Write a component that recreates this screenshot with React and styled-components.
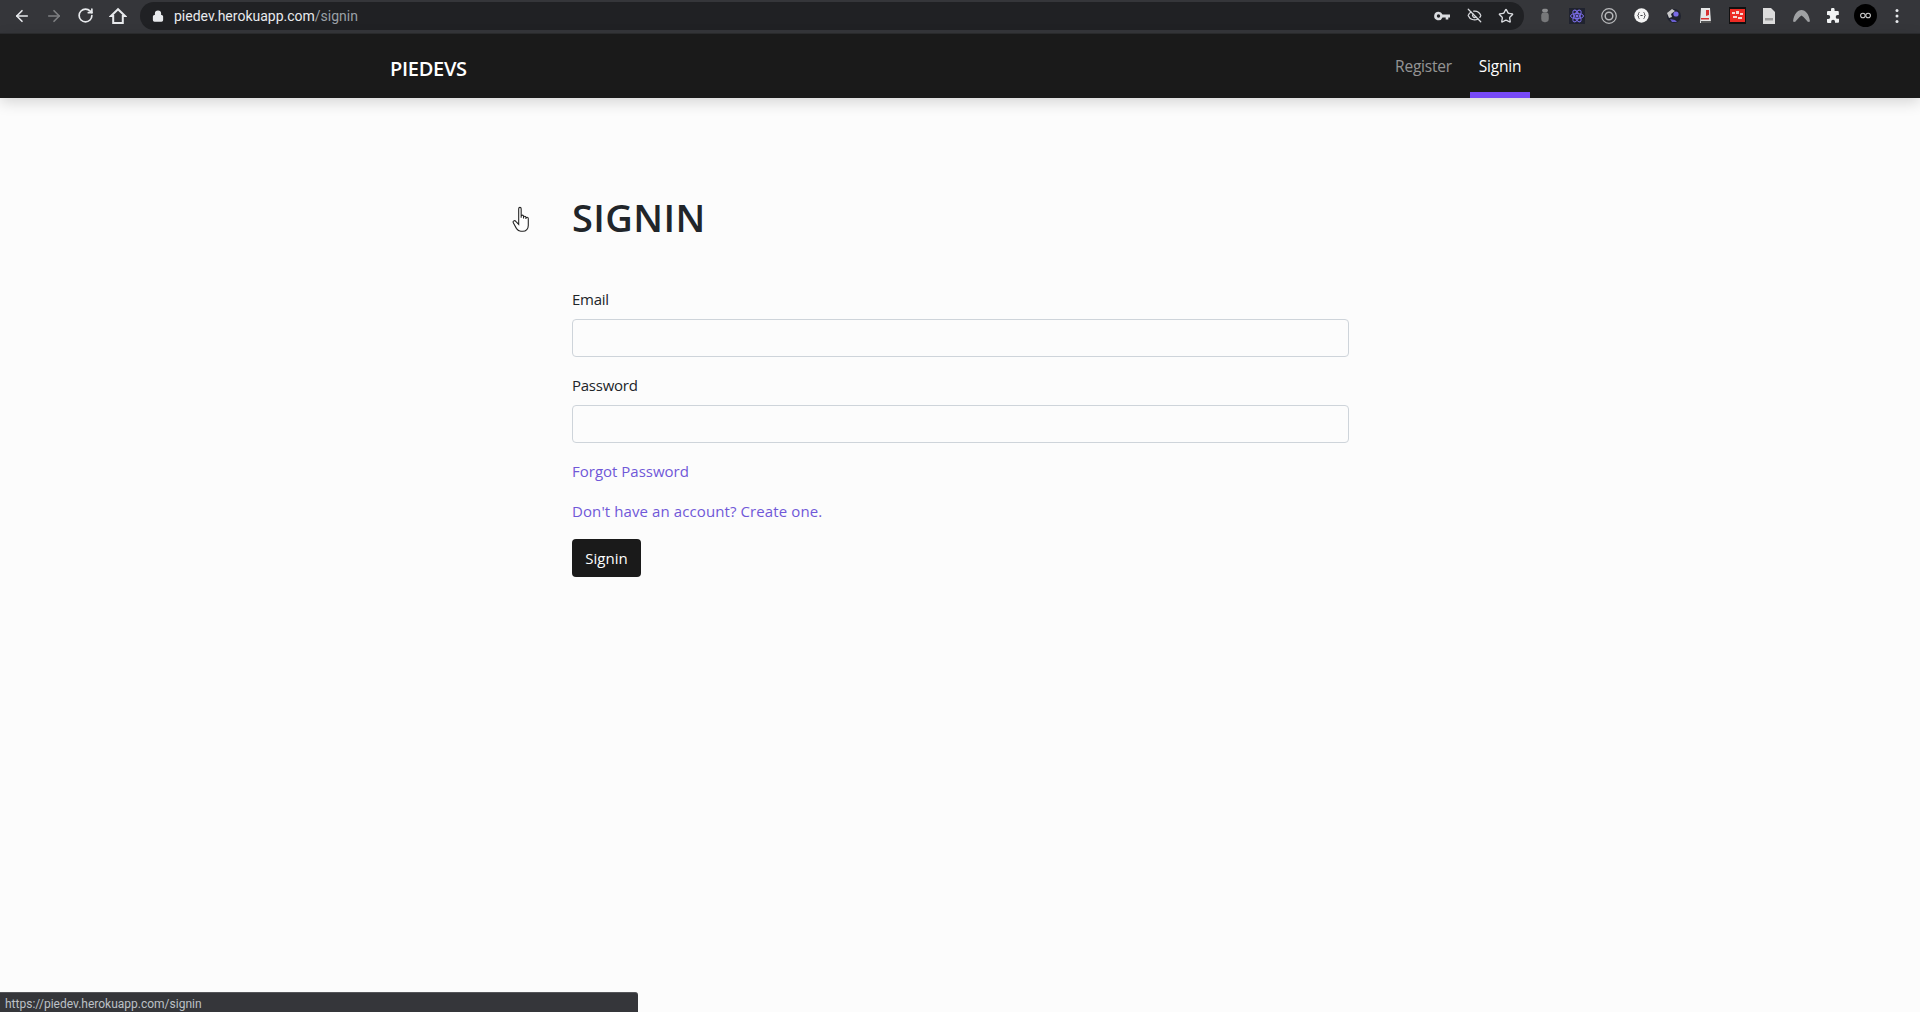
import styled, { createGlobalStyle } from 'styled-components';
import { ArrowLeft, ArrowRight, RotateCw, Lock, EyeOff, Star } from 'lucide-react';

const GlobalStyle = createGlobalStyle`
  html, body {
    margin: 0;
    padding: 0;
    background: #fcfcfc;
  }
  * { box-sizing: border-box; }
`;

const Page = styled.div`
  height: 1012px;
  overflow: hidden;
  display: flex;
  flex-direction: column;
  background: #fcfcfc;
  font-family: "Open Sans", "Noto Sans", sans-serif;
  color: #212529;
`;

const BrowserBar = styled.div`
  height: 34px;
  flex: none;
  display: flex;
  align-items: center;
  padding: 0 0 2px 13px;
  background: #35363a;
  border-bottom: 1px solid #2b2c2f;
`;

const NavButton = styled.div`
  width: 32px;
  flex: none;
  display: flex;
  align-items: center;
  color: ${({ $dim }) => ($dim ? '#7f8083' : '#e8eaed')};
`;

const Omnibox = styled.div`
  width: 1384px;
  height: 28px;
  flex: none;
  margin-left: -1px;
  display: flex;
  align-items: center;
  padding: 0 2px 0 12px;
  border-radius: 14px;
  background: #202124;
  font-family: "Roboto", sans-serif;
  font-size: 14px;
  color: #e8eaed;
`;

const UrlText = styled.span`
  margin-left: 10px;
  flex: 1;
  span { color: #9aa0a6; }
`;

const OmniIcon = styled.div`
  width: 32px;
  display: flex;
  justify-content: center;
  color: #dadce0;
`;

const Extensions = styled.div`
  display: flex;
  align-items: center;
  margin-left: 5px;
`;

const Ext = styled.div`
  width: 32px;
  height: 24px;
  flex: none;
  display: flex;
  align-items: center;
  justify-content: center;
`;

const Navbar = styled.nav`
  height: 64px;
  flex: none;
  background: #1a1a1a;
  box-shadow: 0 4px 14px rgba(0, 0, 0, 0.16);
  position: relative;
`;

const NavInner = styled.div`
  width: 1140px;
  height: 100%;
  margin: 0 auto;
  display: flex;
  align-items: stretch;
  justify-content: space-between;
`;

const Brand = styled.a`
  align-self: center;
  padding-top: 5px;
  font-size: 20px;
  font-weight: 600;
  letter-spacing: -0.3px;
  color: #fff;
`;

const NavLinks = styled.div`
  display: flex;
`;

const NavLink = styled.a`
  display: flex;
  align-items: center;
  justify-content: center;
  height: 100%;
  padding: 5px 0 0;
  margin-left: ${({ $gap }) => $gap}px;
  width: ${({ $w }) => $w}px;
  font-size: 15.5px;
  letter-spacing: -0.2px;
  color: ${({ $active }) => ($active ? '#fff' : 'rgba(255, 255, 255, 0.55)')};
  border-bottom: 6px solid ${({ $active }) => ($active ? '#7749f8' : 'transparent')};
`;

const Main = styled.main`
  width: 1140px;
  margin: 0 auto;
  padding: 0 182px;
`;

const FormWrap = styled.div`
  width: 777px;
  position: relative;
`;

const Title = styled.h1`
  margin: 0;
  padding-top: 93px;
  height: 189px;
  font-size: 38px;
  line-height: 52px;
  font-weight: 600;
  letter-spacing: 0.4px;
  color: #212529;
`;

const Field = styled.div`
  margin-bottom: 16px;
`;

const Label = styled.label`
  display: block;
  height: 32px;
  font-size: 15px;
  line-height: 24px;
  letter-spacing: -0.25px;
  color: #212529;
`;

const Input = styled.input`
  display: block;
  width: 100%;
  height: 38px;
  padding: 6px 12px;
  background: #fcfcfc;
  border: 1px solid #ced4da;
  border-radius: 4px;
  outline: none;
`;

const TextLink = styled.a`
  display: block;
  height: 24px;
  margin-top: ${({ $top }) => $top}px;
  font-size: 15px;
  line-height: 24px;
  letter-spacing: ${({ $spacing }) => $spacing || 0}px;
  color: #7058d8;
`;

const SubmitButton = styled.button`
  display: block;
  width: 69px;
  height: 38px;
  margin-top: 16px;
  padding: 0;
  border: none;
  border-radius: 4px;
  background: #1a1a1a;
  color: #fff;
  font-family: inherit;
  font-size: 15px;
`;

const Cursor = styled.svg`
  position: absolute;
  left: -60px;
  top: 108px;
`;

const StatusBubble = styled.div`
  position: fixed;
  left: 0;
  bottom: 0;
  width: 638px;
  height: 20px;
  padding: 4px 0 0 5px;
  background: #35363a;
  border-top: 1px solid #55565a;
  border-top-right-radius: 3px;
  font-family: "Roboto", sans-serif;
  font-size: 12px;
  line-height: 15px;
  color: #bdc1c6;
`;

const HomeIcon = () => (
  <svg width="18" height="18" viewBox="0 0 18 18" fill="none" stroke="#e8eaed" strokeWidth="2" strokeLinejoin="miter">
    <path d="M9 2.200L2 9h2.200v7h9.600V9H16z" />
  </svg>
);

const KeyIcon = () => (
  <svg width="16" height="16" viewBox="0 0 16 16" fill="currentColor">
    <path fillRule="evenodd" d="M4.500 3.700a4.300 4.300 0 0 1 4 2.800H16v3h-1.700v2h-2.600v-2H8.500a4.300 4.300 0 1 1-4-5.800zm0 2.600a1.700 1.700 0 1 0 0 3.400 1.700 1.700 0 0 0 0-3.400z" />
  </svg>
);

const PuzzleIcon = () => (
  <svg width="16" height="16" viewBox="0 0 16 16" fill="#f1f3f4">
    <path d="M6 1.600a1.800 1.800 0 0 1 3.600 0V3h3.200a1 1 0 0 1 1 1v3h-1.200a1.900 1.900 0 0 0 0 3.800H14v3a1 1 0 0 1-1 1h-3v-1.200a1.900 1.900 0 0 0-3.800 0V15H3a1 1 0 0 1-1-1v-3.100h1.300a1.900 1.900 0 0 0 0-3.800H2V4a1 1 0 0 1 1-1h3z" />
  </svg>
);

const extensionIcons = [
  <svg key="bug" width="10" height="15" viewBox="0 0 12 18">
    <rect x="2.500" y="1" width="7" height="4" rx="2" fill="#8c8d8f" />
    <rect x="1.500" y="5" width="9" height="12" rx="4" fill="#77787a" />
  </svg>,
  <svg key="react" width="16" height="16" viewBox="0 0 16 16" style={{ background: '#20232f' }}>
    <g fill="none" stroke="#7a6ce8" strokeWidth="1">
      <ellipse cx="8" cy="8" rx="6.500" ry="2.600" />
      <ellipse cx="8" cy="8" rx="6.500" ry="2.600" transform="rotate(60 8 8)" />
      <ellipse cx="8" cy="8" rx="6.500" ry="2.600" transform="rotate(120 8 8)" />
    </g>
    <circle cx="8" cy="8" r="1.500" fill="#7a6ce8" />
  </svg>,
  <svg key="rings" width="16" height="16" viewBox="0 0 16 16" fill="none" stroke="#b9babc">
    <circle cx="8" cy="8" r="7.300" strokeWidth="1.200" />
    <circle cx="8" cy="8" r="3.800" strokeWidth="1.500" />
  </svg>,
  <svg key="json" width="15" height="15" viewBox="0 0 15 15">
    <circle cx="7.500" cy="7.500" r="7.200" fill="#f4f4f4" />
    <path d="M5.400 4.500c-1 0-.9.800-.9 1.600 0 .8-.3 1.300-.9 1.400.6.1.9.6.9 1.400 0 .8-.1 1.600.9 1.600M9.600 4.500c1 0 .9.800.9 1.600 0 .8.3 1.300.9 1.400-.6.1-.9.6-.9 1.400 0 .8.100 1.600-.9 1.600" fill="none" stroke="#35363a" strokeWidth="0.900" />
    <rect x="6.400" y="7.100" width="2.200" height="0.900" fill="#35363a" />
  </svg>,
  <svg key="globe" width="17" height="17" viewBox="0 0 17 17">
    <circle cx="9" cy="9" r="7" fill="#20232f" />
    <path d="M2 6l5-4 3 2-4 3 1 3-3 1z" fill="#c9c9c9" />
    <circle cx="11" cy="7" r="2.600" fill="#7a6ce8" />
    <path d="M5 12l5 1 2 2-5 0z" fill="#6a5fcf" />
  </svg>,
  <svg key="doc" width="15" height="17" viewBox="0 0 15 17">
    <path d="M3 1h9l1 15H2z" fill="#e6e6e6" />
    <path d="M8 3l3 0v5l-3 1zM3 11h8v1.500H3z" fill="#d83030" />
    <path d="M3 14h10v2H3z" fill="#555" />
  </svg>,
  <svg key="red" width="17" height="17" viewBox="0 0 17 17">
    <rect width="17" height="17" fill="#111" />
    <rect x="1" y="2" width="15" height="13" fill="#ee2b24" />
    <path d="M3 5h3v2H3zM7 4h3v3H7zM11 6h3v2h-3zM4 9h4v2H4zM9 10h4v2H9z" fill="#f5d9d5" />
  </svg>,
  <svg key="file" width="14" height="16" viewBox="0 0 14 16">
    <path d="M1 0h8l4 4v12H1z" fill="#dcdcdc" />
    <rect x="3" y="10" width="8" height="2.500" fill="#9b9b9b" />
  </svg>,
  <svg key="arc" width="17" height="14" viewBox="0 0 17 14">
    <path d="M0 12.500C1 5 4.500 1 8.500 1s7.500 4 8.500 11.500l-2 .5-4.500-5-2-1.500-2 1.500L2 13z" fill="#9fa1a3" />
  </svg>,
];

const App = () => {
  return (
    <Page>
      <GlobalStyle />
      <BrowserBar>
        <NavButton><ArrowLeft size={18} strokeWidth={2.2} /></NavButton>
        <NavButton $dim><ArrowRight size={18} strokeWidth={2.2} /></NavButton>
        <NavButton><RotateCw size={17} strokeWidth={2.4} /></NavButton>
        <NavButton><HomeIcon /></NavButton>
        <Omnibox>
          <Lock size={12} fill="#e8eaed" strokeWidth={2.5} />
          <UrlText>piedev.herokuapp.com<span>/signin</span></UrlText>
          <OmniIcon><KeyIcon /></OmniIcon>
          <OmniIcon><EyeOff size={15} strokeWidth={2} /></OmniIcon>
          <OmniIcon><Star size={16} strokeWidth={2} /></OmniIcon>
        </Omnibox>
        <Extensions>
          {extensionIcons.map((icon) => <Ext key={icon.key}>{icon}</Ext>)}
          <Ext><PuzzleIcon /></Ext>
          <Ext>
            <svg width="23" height="23" viewBox="0 0 22 22">
              <circle cx="11" cy="11" r="11" fill="#000" />
              <circle cx="8.500" cy="11" r="2.200" fill="none" stroke="#ccc" />
              <circle cx="13.500" cy="11" r="2.200" fill="none" stroke="#ccc" />
            </svg>
          </Ext>
          <Ext>
            <svg width="4" height="16" viewBox="0 0 4 16" fill="#e8eaed">
              <circle cx="2" cy="2.500" r="1.500" />
              <circle cx="2" cy="8" r="1.500" />
              <circle cx="2" cy="13.500" r="1.500" />
            </svg>
          </Ext>
        </Extensions>
      </BrowserBar>

      <Navbar>
        <NavInner>
          <Brand>PIEDEVS</Brand>
          <NavLinks>
            <NavLink $w={73} $gap={0}>Register</NavLink>
            <NavLink $active $w={60} $gap={10}>Signin</NavLink>
          </NavLinks>
        </NavInner>
      </Navbar>

      <Main>
        <FormWrap>
          <Cursor width="22" height="28" viewBox="0 0 20 26" fill="#fff" stroke="#222" strokeWidth="1">
            <path d="M6 2.500c0-1.600 2.300-1.600 2.300 0V11V9.500c0-1.400 2.200-1.400 2.200 0V11.500V10.500c0-1.400 2.200-1.400 2.200 0V12V11.500c0-1.300 2.200-1.300 2.200 0V18c0 3-2 5.500-5 5.500H8c-2 0-3-1-4-2.500L1 15.500c-.8-1.500 1.200-2.600 2.300-1.300L6 17z" />
          </Cursor>
          <Title>SIGNIN</Title>
          <Field>
            <Label>Email</Label>
            <Input type="email" />
          </Field>
          <Field>
            <Label>Password</Label>
            <Input type="password" />
          </Field>
          <TextLink $top={0}>Forgot Password</TextLink>
          <TextLink $top={16} $spacing={0.1}>Don't have an account? Create one.</TextLink>
          <SubmitButton>Signin</SubmitButton>
        </FormWrap>
      </Main>

      <StatusBubble>https://piedev.herokuapp.com/signin</StatusBubble>
    </Page>
  );
};

export default App;
